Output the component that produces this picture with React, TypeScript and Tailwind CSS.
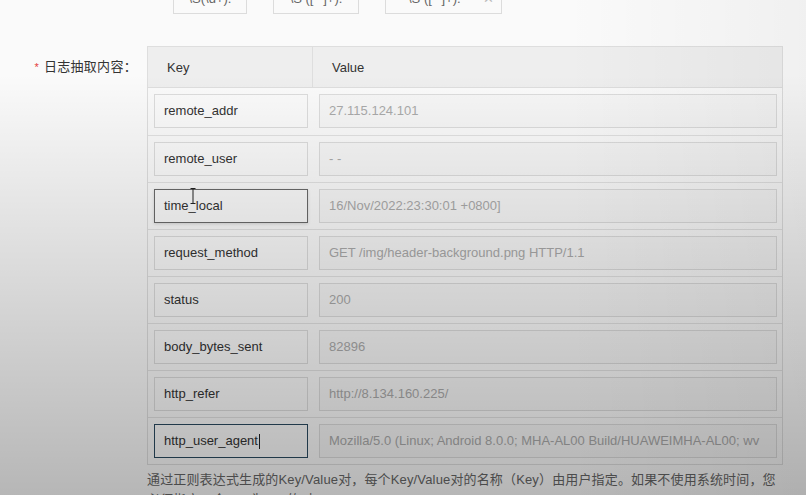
import React from "react";

const rows = [
  { key: "remote_addr", value: "27.115.124.101" },
  { key: "remote_user", value: "- -" },
  { key: "time_local", value: "16/Nov/2022:23:30:01 +0800]", focus: "hover" },
  { key: "request_method", value: "GET /img/header-background.png HTTP/1.1" },
  { key: "status", value: "200" },
  { key: "body_bytes_sent", value: "82896" },
  { key: "http_refer", value: "http://8.134.160.225/" },
  {
    key: "http_user_agent",
    value: "Mozilla/5.0 (Linux; Android 8.0.0; MHA-AL00 Build/HUAWEIMHA-AL00; wv",
    focus: "active",
  },
];

const font = { fontFamily: '"Liberation Sans", "Noto Sans CJK SC", sans-serif' };

export default function App() {
  return (
    <div
      className="relative w-[806px] h-[495px] overflow-hidden bg-[#fafafa] text-[13px] text-[#333]"
      style={font}
    >
      {/* Regex pieces, cut off at the top */}
      <div className="flex items-end pl-[157px] -mt-[22px] h-9">
        <span className="w-4 text-[#555] pb-[19px] leading-none">·</span>
        <div className="h-9 w-[74px] border border-[#dcdcdc] bg-[#fafafa] flex items-end justify-center pb-[7px] leading-[15px] text-[#666]">
          \S(\d+).
        </div>
        <span className="w-[26px] text-center text-[#555] pb-[19px] leading-none">·</span>
        <div className="h-9 w-[86px] border border-[#dcdcdc] bg-[#fafafa] flex items-end justify-center pb-[7px] leading-[15px] text-[#666]">
          \S ([^ ]+).
        </div>
        <span className="w-[26px] text-center text-[#555] pb-[19px] leading-none">·</span>
        <div className="h-9 w-[117px] border border-[#dcdcdc] bg-[#fafafa] flex items-end pb-[7px] leading-[15px] pl-[22px] gap-[22px] text-[#666]">
          <span>\S ([^ ]+).</span>
          <span className="text-[#bbb]">✕</span>
        </div>
      </div>

      {/* Form row */}
      <div className="flex mt-8">
        <div className="w-[147px] shrink-0 h-[42px] flex items-center justify-end pr-[10px]">
          <span className="text-[#e4393c] mr-[5px] text-[11px]">*</span>
          <span className="text-[#333] tracking-[0.3px]">日志抽取内容：</span>
        </div>

        <div className="w-[636px]">
          <div className="border border-[#dedede]">
            <div className="flex h-[41px] bg-[#eeeeee] border-b border-[#dedede]">
              <div className="w-[165px] border-r border-[#dedede] flex items-center pl-[19px] pt-px">Key</div>
              <div className="flex-1 flex items-center pl-[19px] pt-px">Value</div>
            </div>
            {rows.map((r, i) => (
              <div
                key={r.key}
                className={
                  "flex h-[47px] items-start pt-[6px] " +
                  (i > 0 ? "border-t border-[#e2e2e2]" : "")
                }
              >
                <div className="w-[165px] pl-[6px] pr-[5px]">
                  <div
                    className={
                      "relative h-[34px] flex items-center pl-[9px] bg-[#fafafa] border " +
                      (r.focus === "hover"
                        ? "border-[#6a6a6a] shadow-[0_1px_3px_rgba(0,0,0,0.15)]"
                        : r.focus === "active"
                        ? "border-[#2a4a60]"
                        : "border-[#dcdcdc]")
                    }
                  >
                    {r.key}
                    {r.focus === "active" && <span className="w-px h-[15px] bg-[#222] ml-[1px]" />}
                    {r.focus === "hover" && (
                      <svg
                        className="absolute left-[35px] -top-[2px]"
                        width="6"
                        height="16"
                        viewBox="0 0 6 16"
                      >
                        <path d="M0.5 0.5h5M3 0.5v15M0.5 15.5h5" stroke="#222" strokeWidth="1" fill="none" />
                      </svg>
                    )}
                  </div>
                </div>
                <div className="flex-1 pl-[6px] pr-[5px]">
                  <div className="h-[34px] flex items-center pl-[9px] bg-[#f6f6f6] border border-[#dcdcdc] text-[#aaa] whitespace-nowrap overflow-hidden">
                    {r.value}
                  </div>
                </div>
              </div>
            ))}
          </div>
          <p className="w-[636px] mt-[5px] leading-[20px] text-[#666] tracking-[0.15px]">
            通过正则表达式生成的Key/Value对，每个Key/Value对的名称（Key）由用户指定。如果不使用系统时间，您必须指定一个time为Key的对。
          </p>
        </div>
      </div>

      {/* Video-frame shading */}
      <div className="pointer-events-none absolute inset-0 bg-[linear-gradient(to_bottom,rgba(0,0,0,0)_15%,rgba(0,0,0,0.27)_100%)]" />
      <div className="pointer-events-none absolute inset-0 bg-[linear-gradient(to_right,rgba(0,0,0,0)_70%,rgba(0,0,0,0.04)_100%)]" />
    </div>
  );
}
